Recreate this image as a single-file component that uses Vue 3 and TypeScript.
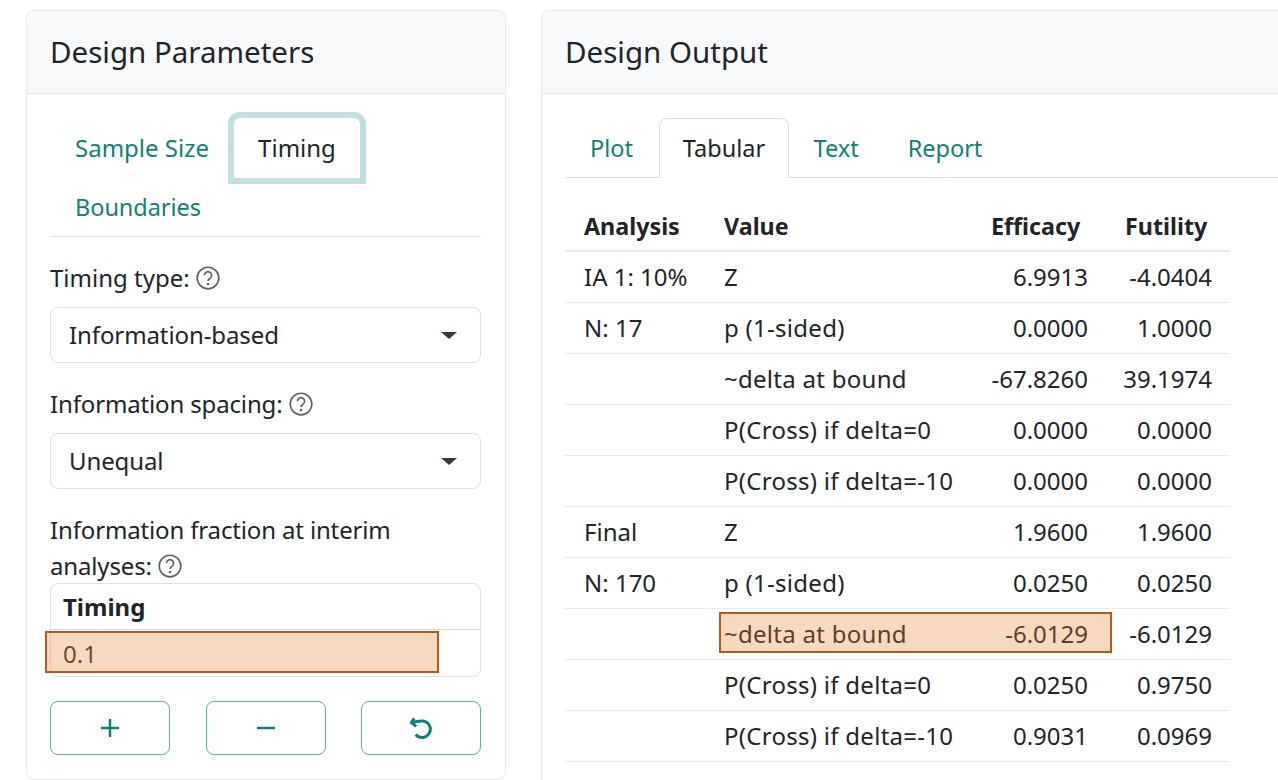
<script setup lang="ts">
interface Row { a: string; v: string; e: string; f: string }
const rows: Row[] = [
  { a: 'IA 1: 10%', v: 'Z', e: '6.9913', f: '-4.0404' },
  { a: 'N: 17', v: 'p (1-sided)', e: '0.0000', f: '1.0000' },
  { a: '', v: '~delta at bound', e: '-67.8260', f: '39.1974' },
  { a: '', v: 'P(Cross) if delta=0', e: '0.0000', f: '0.0000' },
  { a: '', v: 'P(Cross) if delta=-10', e: '0.0000', f: '0.0000' },
  { a: 'Final', v: 'Z', e: '1.9600', f: '1.9600' },
  { a: 'N: 170', v: 'p (1-sided)', e: '0.0250', f: '0.0250' },
  { a: '', v: '~delta at bound', e: '-6.0129', f: '-6.0129' },
  { a: '', v: 'P(Cross) if delta=0', e: '0.0250', f: '0.9750' },
  { a: '', v: 'P(Cross) if delta=-10', e: '0.9031', f: '0.0969' },
]
</script>

<template>
  <div class="page">
    <section class="card left">
      <h2 class="head">Design Parameters</h2>
      <div class="body">
        <nav class="ltabs">
          <a class="ltab first">Sample Size</a>
          <a class="ltab focus">Timing</a>
          <a class="ltab first wrap">Boundaries</a>
        </nav>

        <div class="label lab1">Timing type:
          <svg class="help" viewBox="0 0 16 16"><circle cx="8" cy="8" r="7.2" /><path d="M5.6 6.2a2.4 2.4 0 1 1 3.6 2.1c-.8.5-1.2.9-1.2 1.7" /><circle class="dot" cx="8" cy="12" r=".9" /></svg>
        </div>
        <div class="select">Information-based<span class="caret"></span></div>

        <div class="label lab2">Information spacing:
          <svg class="help" viewBox="0 0 16 16"><circle cx="8" cy="8" r="7.2" /><path d="M5.6 6.2a2.4 2.4 0 1 1 3.6 2.1c-.8.5-1.2.9-1.2 1.7" /><circle class="dot" cx="8" cy="12" r=".9" /></svg>
        </div>
        <div class="select">Unequal<span class="caret"></span></div>

        <div class="label lab3">Information fraction at interim<br />analyses:
          <svg class="help" viewBox="0 0 16 16"><circle cx="8" cy="8" r="7.2" /><path d="M5.6 6.2a2.4 2.4 0 1 1 3.6 2.1c-.8.5-1.2.9-1.2 1.7" /><circle class="dot" cx="8" cy="12" r=".9" /></svg>
        </div>
        <div class="mini">
          <div class="mini-h">Timing</div>
          <div class="mini-c">0.1</div>
          <div class="mark mark-a"></div>
        </div>

        <div class="btns">
          <button class="btn" type="button">
            <svg viewBox="0 0 20 20"><path d="M10 1v18M1 10h18" /></svg>
          </button>
          <button class="btn" type="button">
            <svg viewBox="0 0 20 20"><path d="M1 10h18" /></svg>
          </button>
          <button class="btn" type="button">
            <svg class="undo" viewBox="0 0 24 24"><path d="M5.2 2.4 2.4 6.6l4.8 3.8" /><path d="M3 6.6Q7.5 4.9 13 4.9a8.3 8.3 0 1 1-6.4 13.6" /></svg>
          </button>
        </div>
      </div>
    </section>

    <section class="card right">
      <h2 class="head">Design Output</h2>
      <div class="body">
        <nav class="rtabs">
          <a class="rtab plot">Plot</a>
          <a class="rtab active">Tabular</a>
          <a class="rtab">Text</a>
          <a class="rtab">Report</a>
        </nav>
        <div class="tbl-wrap">
          <table class="tbl">
            <thead>
              <tr><th class="c1">Analysis</th><th class="c2">Value</th><th class="c3">Efficacy</th><th class="c4">Futility</th></tr>
            </thead>
            <tbody>
              <tr v-for="(r, i) in rows" :key="i">
                <td>{{ r.a }}</td><td class="val">{{ r.v }}</td><td class="num">{{ r.e }}</td><td class="num">{{ r.f }}</td>
              </tr>
            </tbody>
          </table>
          <div class="mark mark-b"></div>
        </div>
      </div>
    </section>
  </div>
</template>

<style>
html, body { margin: 0; background: #fff; overflow: hidden; }
</style>

<style scoped>
.page {
  width: 1278px;
  height: 780px;
  overflow: hidden;
  box-sizing: border-box;
  padding: 10px 0 0 26px;
  display: flex;
  gap: 35px;
  font-family: "Noto Sans", "Open Sans", sans-serif;
  font-size: 24px;
  color: #212529;
  background: #fff;
}
.card {
  box-sizing: border-box;
  border: 1px solid #e6e8ea;
  border-radius: 8px;
  background: #fff;
  flex: none;
}
.left { width: 480px; height: 770px; }
.right { width: 780px; height: 800px; }
.head {
  margin: 0;
  height: 83px;
  box-sizing: border-box;
  padding-left: 23px;
  line-height: 81px;
  font-size: 29.5px;
  font-weight: 400;
  background: #f8f9fa;
  border-bottom: 1px solid #e3e5e8;
  border-radius: 8px 8px 0 0;
}
.body { padding: 0 24px 0 23px; position: relative; }

.ltabs {
  display: flex;
  flex-wrap: wrap;
  height: 143px;
  box-sizing: border-box;
  border-bottom: 1px solid #dee2e6;
  padding-top: 24px;
  align-content: flex-start;
}
.ltab {
  height: 60px;
  line-height: 60px;
  color: #0f8277;
  box-sizing: border-box;
}
.first { padding: 0 24px 0 25px; }
.focus {
  width: 138px;
  height: 72px;
  margin: -6px 0 0 -5px;
  line-height: 60px;
  text-align: center;
  color: #212529;
  border: 6px solid #bfe0dc;
  border-radius: 12px 12px 0 0;
}
.wrap { flex-basis: 100%; margin-top: -7px; font-size: 23.5px; letter-spacing: -0.05px; }

.label { line-height: 36px; }
.lab1 { margin-top: 23px; height: 36px; }
.lab2 { margin-top: 23px; height: 36px; letter-spacing: -0.15px; }
.lab3 { margin-top: 23px; height: 71px; letter-spacing: -0.15px; }
.help {
  width: 24px;
  height: 24px;
  vertical-align: -3px;
  fill: none;
  stroke: #5f6468;
  stroke-width: 1.1;
}
.help .dot { fill: #5f6468; stroke: none; }
.select {
  position: relative;
  box-sizing: border-box;
  height: 56px;
  margin-top: 11px;
  padding-left: 18px;
  line-height: 54px;
  letter-spacing: -0.1px;
  border: 1px solid #dee2e6;
  border-radius: 8px;
}
.caret {
  position: absolute;
  right: 23px;
  top: 24px;
  border: 8px solid transparent;
  border-top: 7px solid #343a40;
  border-bottom: 0;
}
.mini {
  position: relative;
  box-sizing: border-box;
  height: 94px;
  border: 1px solid #dee2e6;
  border-radius: 8px;
}
.mini-h {
  height: 46px;
  box-sizing: border-box;
  padding-left: 12px;
  line-height: 46px;
  font-weight: 700;
  border-bottom: 1px solid #d5d9dd;
}
.mini-c {
  padding-left: 12px;
  line-height: 48px;
  color: #333;
}
.mark {
  position: absolute;
  box-sizing: border-box;
  background: rgba(235, 125, 48, 0.3);
  border: 2px solid #b5591f;
}
.mark-a { left: -6px; top: 47px; width: 394px; height: 42px; }
.mark-b { left: 154px; top: 411px; width: 393px; height: 41px; }
.btns {
  display: flex;
  justify-content: space-between;
  margin-top: 24px;
}
.btn {
  width: 120px;
  height: 54px;
  padding: 0;
  background: #fff;
  border: 1.5px solid #5fb0a7;
  border-radius: 8px;
  display: flex;
  align-items: center;
  justify-content: center;
}
.btn svg {
  width: 20px;
  height: 20px;
  fill: none;
  stroke: #0f8277;
  stroke-width: 2.5;
}
.btn .undo { width: 24px; height: 24px; stroke-width: 3; }

.rtabs {
  display: flex;
  margin-top: 24px;
  padding-left: 0.5px;
  height: 60px;
  box-sizing: border-box;
  border-bottom: 1px solid #dee2e6;
  font-size: 23.5px;
}
.rtab {
  height: 60px;
  line-height: 60px;
  padding: 0 24.5px;
  box-sizing: border-box;
  color: #0f8277;
}
.plot { width: 93.5px; }
.active {
  width: 130px;
  padding: 0;
  text-align: center;
  color: #212529;
  background: #fff;
  border: 1px solid #dee2e6;
  border-bottom: 0;
  border-radius: 8px 8px 0 0;
  line-height: 59px;
}
.tbl-wrap { position: relative; width: 665px; margin-top: 23px; }
.tbl {
  width: 665px;
  border-collapse: collapse;
  table-layout: fixed;
}
.tbl th, .tbl td {
  padding: 0 18px 0 19px;
  height: 51px;
  box-sizing: border-box;
  text-align: left;
  border-bottom: 1px solid #e9eaec;
  white-space: nowrap;
}
.tbl th { height: 50px; font-size: 23.3px; font-weight: 700; border-bottom-width: 2px; }
.tbl .val { letter-spacing: 0.28px; }
.tbl .num { text-align: right; padding-left: 0; }
.c1 { width: 140px; }
.c2 { width: 267px; }
.c3 { width: 134px; }
.c4 { width: 124px; }
</style>
